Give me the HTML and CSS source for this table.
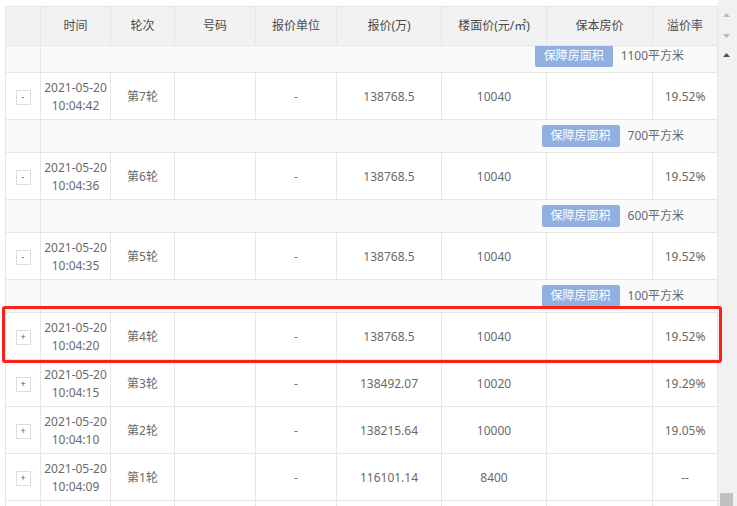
FILE: index.html
```html
<!DOCTYPE html>
<html lang="zh-CN">
<head>
<meta charset="utf-8">
<title>出价记录</title>
<link rel="stylesheet" href="styles.css">
</head>
<body>
<div class="page">
  <div class="grid">
    <table class="tbl head-tbl">
      <colgroup>
        <col class="c1"><col class="c2"><col class="c3"><col class="c4"><col class="c5"><col class="c6"><col class="c7"><col class="c8"><col class="c9">
      </colgroup>
      <thead>
        <tr>
          <th></th><th>时间</th><th>轮次</th><th>号码</th><th>报价单位</th><th>报价(万)</th><th>楼面价(元/㎡)</th><th>保本房价</th><th>溢价率</th>
        </tr>
      </thead>
    </table>
    <div class="viewport">
      <table class="tbl body-tbl">
        <colgroup>
          <col class="c1"><col class="c2"><col class="c3"><col class="c4"><col class="c5"><col class="c6"><col class="c7"><col class="c8"><col class="c9">
        </colgroup>
        <tbody>
          <tr class="sub"><td></td><td colspan="8"><span class="tag">保障房面积</span><span class="area">1100平方米</span></td></tr>
          <tr class="row"><td><span class="tog">-</span></td><td>2021-05-20<br>10:04:42</td><td>第7轮</td><td></td><td>-</td><td>138768.5</td><td>10040</td><td></td><td>19.52%</td></tr>
          <tr class="sub"><td></td><td colspan="8"><span class="tag">保障房面积</span><span class="area">700平方米</span></td></tr>
          <tr class="row"><td><span class="tog">-</span></td><td>2021-05-20<br>10:04:36</td><td>第6轮</td><td></td><td>-</td><td>138768.5</td><td>10040</td><td></td><td>19.52%</td></tr>
          <tr class="sub"><td></td><td colspan="8"><span class="tag">保障房面积</span><span class="area">600平方米</span></td></tr>
          <tr class="row"><td><span class="tog">-</span></td><td>2021-05-20<br>10:04:35</td><td>第5轮</td><td></td><td>-</td><td>138768.5</td><td>10040</td><td></td><td>19.52%</td></tr>
          <tr class="sub"><td></td><td colspan="8"><span class="tag">保障房面积</span><span class="area">100平方米</span></td></tr>
          <tr class="row"><td><span class="tog">+</span></td><td>2021-05-20<br>10:04:20</td><td>第4轮</td><td></td><td>-</td><td>138768.5</td><td>10040</td><td></td><td>19.52%</td></tr>
          <tr class="row"><td><span class="tog">+</span></td><td>2021-05-20<br>10:04:15</td><td>第3轮</td><td></td><td>-</td><td>138492.07</td><td>10020</td><td></td><td>19.29%</td></tr>
          <tr class="row"><td><span class="tog">+</span></td><td>2021-05-20<br>10:04:10</td><td>第2轮</td><td></td><td>-</td><td>138215.64</td><td>10000</td><td></td><td>19.05%</td></tr>
          <tr class="row"><td><span class="tog">+</span></td><td>2021-05-20<br>10:04:09</td><td>第1轮</td><td></td><td>-</td><td>116101.14</td><td>8400</td><td></td><td>--</td></tr>
          <tr class="row"><td></td><td></td><td></td><td></td><td></td><td></td><td></td><td></td><td></td></tr>
        </tbody>
      </table>
    </div>
  </div>
  <div class="scrollbar">
    <div class="sb-head">
      <svg class="arrow" width="7" height="4" viewBox="0 0 7 4"><polygon points="0,4 3.5,0 7,4" fill="#b9b9b9"/></svg>
      <svg class="arrow down" width="7" height="4" viewBox="0 0 7 4"><polygon points="0,0 3.5,4 7,0" fill="#b9b9b9"/></svg>
    </div>
    <div class="sb-body">
      <svg class="arrow up-dark" width="7" height="4" viewBox="0 0 7 4"><polygon points="0,4 3.5,0 7,4" fill="#505050"/></svg>
      <div class="thumb"></div>
    </div>
  </div>
  <div class="highlight"></div>
</div>
</body>
</html>
```
FILE: styles.css
```css
html, body {
  margin: 0;
  padding: 0;
  background: #fff;
}
body {
  font-family: "Noto Sans", "Noto Sans CJK SC", sans-serif;
  font-size: 12px;
  color: #6a6a6a;
}
.page {
  position: relative;
  display: flex;
  height: 506px;
  overflow: hidden;
}
.grid {
  width: 713px;
  padding: 6px 0 0 5px;
  display: flex;
  flex-direction: column;
}
.tbl {
  width: 713px;
  table-layout: fixed;
  border-collapse: separate;
  border-spacing: 0;
  border-left: 1px solid #e6e6e6;
}
.tbl th, .tbl td {
  box-sizing: border-box;
  padding: 0;
  border-right: 1px solid #e6e6e6;
  border-bottom: 1px solid #e6e6e6;
  text-align: center;
  vertical-align: middle;
  font-weight: normal;
  line-height: 18px;
}
.c1 { width: 35px; }
.c2 { width: 70px; }
.c3 { width: 64px; }
.c4 { width: 81px; }
.c5 { width: 81px; }
.c6 { width: 105px; }
.c7 { width: 105px; }
.c8 { width: 106px; }
.c9 { width: 65px; }

.head-tbl {
  border-top: 1px solid #e6e6e6;
  background: #f2f2f2;
}
.head-tbl th {
  height: 39px;
  color: #4a4a4a;
}
.viewport {
  flex: 1;
  overflow: hidden;
}
.body-tbl {
  margin-top: -6px;
}
.row td {
  height: 47px;
  background: #fff;
  padding-top: 1px;
}
.sub td {
  height: 33px;
  background: #fafafa;
}
.sub td[colspan] {
  text-align: right;
  padding-right: 33px;
}
.tag {
  display: inline-block;
  vertical-align: middle;
  height: 22px;
  line-height: 22px;
  padding: 0 9px;
  background: #8fb0e0;
  color: #fff;
  border-radius: 2px;
}
.area {
  display: inline-block;
  vertical-align: middle;
  margin-left: 8px;
  color: #6a6a6a;
}
.tog {
  display: inline-block;
  box-sizing: border-box;
  width: 15px;
  height: 15px;
  border: 1px solid #dcdcdc;
  background: #fff;
  font-size: 9px;
  line-height: 12px;
  color: #555;
  vertical-align: middle;
}
.scrollbar {
  width: 19px;
  background: #f1f1f1;
  display: flex;
  flex-direction: column;
}
.sb-head {
  height: 46px;
  display: flex;
  flex-direction: column;
  padding-top: 13px;
  box-sizing: border-box;
}
.arrow {
  display: block;
  margin-left: 5px;
}
.arrow.down {
  margin-top: 17px;
}
.sb-body {
  flex: 1;
  display: flex;
  flex-direction: column;
  padding-top: 7px;
}
.thumb {
  margin-top: auto;
  margin-left: 2px;
  width: 13px;
  height: 13px;
  background: #c1c1c1;
}
.highlight {
  position: absolute;
  left: 2px;
  top: 306px;
  width: 720px;
  height: 57px;
  box-sizing: border-box;
  border: 3px solid #ff1f1a;
  border-radius: 3px;
}
```
